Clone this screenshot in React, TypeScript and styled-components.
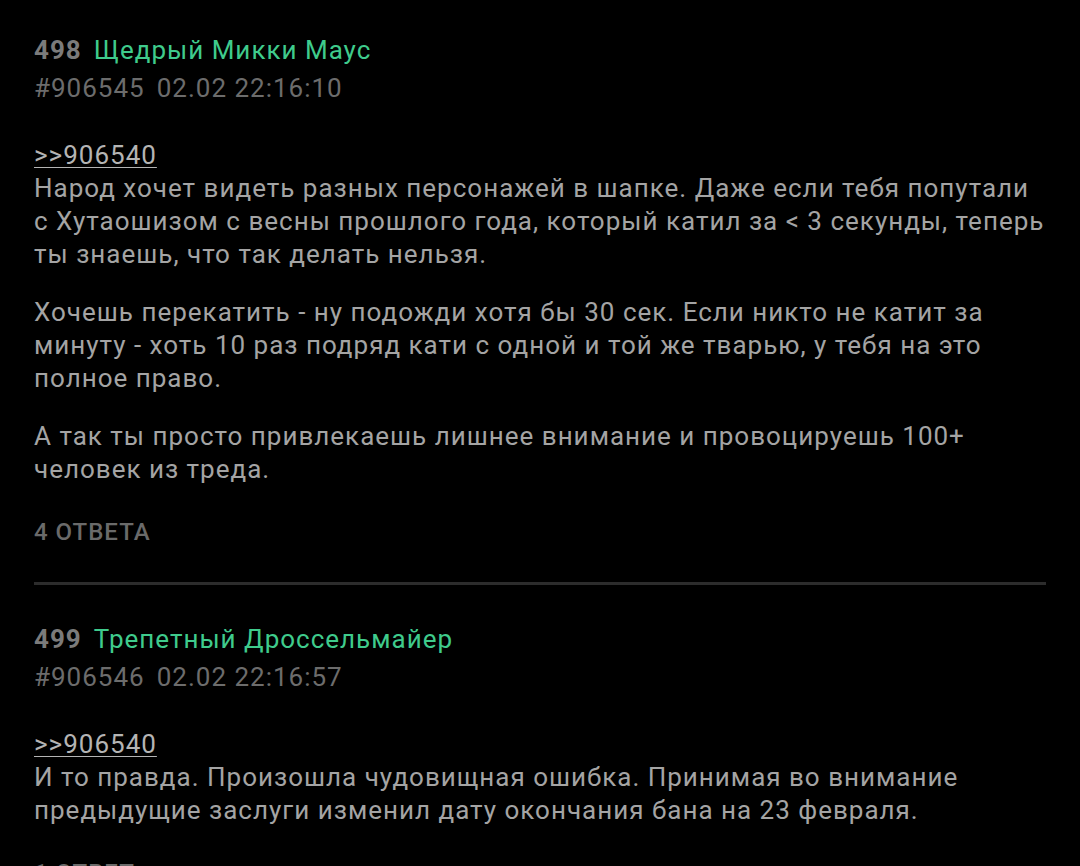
import React from 'react';
import styled, { createGlobalStyle } from 'styled-components';

const GlobalStyle = createGlobalStyle`
  html, body {
    margin: 0;
    padding: 0;
    background: #000;
  }
  body {
    font-family: Roboto, "Noto Sans", sans-serif;
    -webkit-font-smoothing: antialiased;
  }
`;

const Feed = styled.div`
  width: 1080px;
  height: 866px;
  overflow: hidden;
  background: #000;
  padding: 31px 34px 0 34px;
  box-sizing: border-box;
  letter-spacing: 1px;
`;

const Post = styled.article`
  display: flex;
  flex-direction: column;
`;

const Header = styled.div`
  display: flex;
  align-items: baseline;
  gap: 12px;
  font-size: 26px;
  line-height: 38px;
`;

const Num = styled.span`
  color: #7b7b7b;
  font-weight: 700;
`;

const Name = styled.span`
  color: #3fcb8c;
`;

const Meta = styled.div`
  display: flex;
  gap: 12px;
  color: #6c6c6c;
  font-size: 26px;
  line-height: 38px;
`;

const Body = styled.div`
  margin-top: 32px;
  color: #a4a4a4;
  font-size: 26px;
  line-height: 33px;
`;

const Reply = styled.a`
  display: inline-block;
  color: #b4b4b4;
  text-decoration: underline;
  text-underline-offset: 3px;
  text-decoration-thickness: 1px;
`;

const Para = styled.p`
  margin: 0 0 25px 0;
  &:last-child {
    margin-bottom: 0;
  }
`;

const Replies = styled.div`
  margin-top: 26px;
  color: #6a6a6a;
  font-size: 24px;
  font-weight: 500;
  line-height: 40px;
  text-transform: uppercase;
`;

const Divider = styled.hr`
  border: none;
  height: 3px;
  background: #2c2c2c;
  margin: 30px 0 35px 0;
`;

type PostData = {
  num: number;
  name: string;
  id: string;
  date: string;
  reply: string;
  paras: string[];
  replies: string;
};

const posts: PostData[] = [
  {
    num: 498,
    name: 'Щедрый Микки Маус',
    id: '#906545',
    date: '02.02 22:16:10',
    reply: '>>906540',
    paras: [
      'Народ хочет видеть разных персонажей в шапке. Даже если тебя попутали с Хутаошизом с весны прошлого года, который катил за < 3 секунды, теперь ты знаешь, что так делать нельзя.',
      'Хочешь перекатить - ну подожди хотя бы 30 сек. Если никто не катит за минуту - хоть 10 раз подряд кати с одной и той же тварью, у тебя на это полное право.',
      'А так ты просто привлекаешь лишнее внимание и провоцируешь 100+ человек из треда.',
    ],
    replies: '4 ответа',
  },
  {
    num: 499,
    name: 'Трепетный Дроссельмайер',
    id: '#906546',
    date: '02.02 22:16:57',
    reply: '>>906540',
    paras: [
      'И то правда. Произошла чудовищная ошибка. Принимая во внимание предыдущие заслуги изменил дату окончания бана на 23 февраля.',
    ],
    replies: '1 ответ',
  },
];

const App = () => {
  return (
    <>
      <GlobalStyle />
      <Feed>
        {posts.map((p, i) => (
          <React.Fragment key={p.num}>
            {i > 0 && <Divider />}
            <Post>
              <Header>
                <Num>{p.num}</Num>
                <Name>{p.name}</Name>
              </Header>
              <Meta>
                <span>{p.id}</span>
                <span>{p.date}</span>
              </Meta>
              <Body>
                <Reply>{p.reply}</Reply>
                {p.paras.map((t, j) => (
                  <Para key={j}>{t}</Para>
                ))}
              </Body>
              <Replies>{p.replies}</Replies>
            </Post>
          </React.Fragment>
        ))}
      </Feed>
    </>
  );
};

export default App;
